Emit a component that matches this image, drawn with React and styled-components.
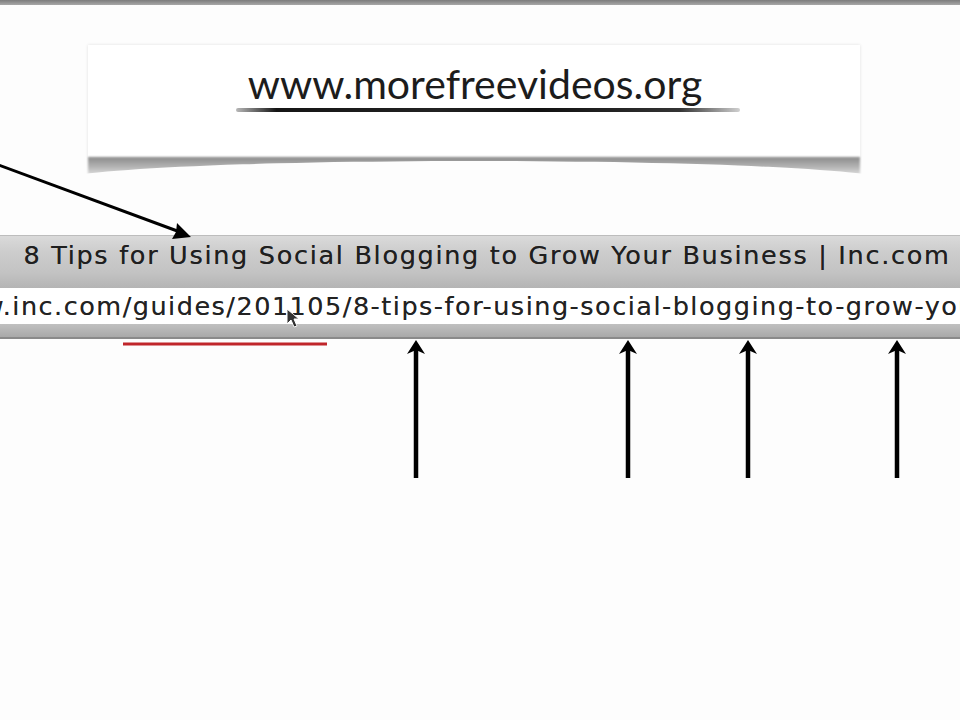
import React from "react";
import styled, { createGlobalStyle } from "styled-components";

const GlobalStyle = createGlobalStyle`
  html, body {
    margin: 0;
    padding: 0;
    background: #fdfdfd;
  }
  body {
    width: 960px;
    height: 720px;
    overflow: hidden;
  }
`;

const Page = styled.div`
  position: relative;
  width: 960px;
  height: 720px;
  overflow: hidden;
  background: #fdfdfd;
  display: flex;
  flex-direction: column;
`;

const TopBar = styled.div`
  height: 5px;
  flex-shrink: 0;
  background: linear-gradient(to bottom, #7c7c7c, #a8a8a8);
`;

const CardRow = styled.div`
  padding: 40px 100px 0 88px;
  height: 230px;
  flex-shrink: 0;
  box-sizing: border-box;
`;

const Card = styled.div`
  position: relative;
  height: 112px;
  background: #ffffff;
  display: flex;
  flex-direction: column;
  align-items: center;
  padding-top: 17px;
  box-sizing: border-box;
  box-shadow: 0 0 3px rgba(0, 0, 0, 0.12);

  &::before {
    content: "";
    position: absolute;
    left: 0;
    right: 0;
    top: 100%;
    height: 18px;
    background: linear-gradient(to bottom, #8a8a8a, #b8b8b8 60%, #e0e0e0);
    filter: blur(1.2px);
  }
  &::after {
    content: "";
    position: absolute;
    left: -30px;
    right: -30px;
    top: calc(100% + 4px);
    height: 40px;
    background: #fdfdfd;
    border-radius: 50% 50% 0 0 / 20px 20px 0 0;
  }
`;

const SiteName = styled.div`
  font-family: "Lato", "Open Sans", sans-serif;
  font-size: 41px;
  color: #1c1c1c;
  line-height: 44px;
  padding-left: 2px;
`;

const Brush = styled.div`
  width: 504px;
  height: 4px;
  margin-top: 2px;
  margin-left: 28px;
  background: linear-gradient(
    to right,
    rgba(20, 20, 20, 0.3),
    #151515 8%,
    #222 40%,
    #111 60%,
    #333 88%,
    rgba(20, 20, 20, 0.2)
  );
  border-radius: 2px;
  filter: blur(0.7px);
`;

const TitleBar = styled.div`
  position: relative;
  z-index: 1;
  height: 53px;
  flex-shrink: 0;
  background: linear-gradient(to bottom, #dadada, #cdcdcd 30%, #c3c3c3 70%, #b4b4b4);
  border-top: 1px solid #bdbdbd;
  box-sizing: border-box;
  padding-top: 3px;
  text-align: center;
`;

const Title = styled.div`
  font-family: "DejaVu Sans", "Liberation Sans", sans-serif;
  font-size: 25.5px;
  letter-spacing: 1.7px;
  color: #1f1f1f;
  text-shadow: 0 0 0.5px rgba(0, 0, 0, 0.6);
  padding-left: 14px;
  line-height: 32px;
  white-space: nowrap;
`;

const AddressField = styled.div`
  position: relative;
  z-index: 1;
  height: 36px;
  flex-shrink: 0;
  background: #ffffff;
  overflow: hidden;
  display: flex;
  align-items: center;
`;

const Address = styled.div`
  font-family: "DejaVu Sans", "Liberation Sans", sans-serif;
  font-size: 25.5px;
  letter-spacing: 1.5px;
  color: #222;
  text-shadow: 0 0 0.5px rgba(0, 0, 0, 0.5);
  white-space: nowrap;
  margin-left: -62px;
`;

const AddressFooter = styled.div`
  height: 13px;
  flex-shrink: 0;
  background: linear-gradient(to bottom, #c0c0c0, #a9a9a9);
  border-bottom: 2px solid #8a8a8a;
`;

const Annotations = styled.svg`
  display: block;
  width: 960px;
  height: 160px;
  flex-shrink: 0;
`;

const Overlay = styled.svg`
  position: absolute;
  z-index: 2;
  left: 0;
  top: 0;
  width: 960px;
  height: 720px;
  pointer-events: none;
`;

const arrowsX = [416, 628, 748, 897];

export default function App() {
  return (
    <Page>
      <GlobalStyle />
      <TopBar />
      <CardRow>
        <Card>
          <SiteName>www.morefreevideos.org</SiteName>
          <Brush />
        </Card>
      </CardRow>
      <TitleBar>
        <Title>8 Tips for Using Social Blogging to Grow Your Business | Inc.com</Title>
      </TitleBar>
      <AddressField>
        <Address>www.inc.com/guides/201105/8-tips-for-using-social-blogging-to-grow-your-business.html</Address>
      </AddressField>
      <AddressFooter />
      <Annotations viewBox="0 0 960 160">
        <line x1="123" y1="5" x2="327" y2="5" stroke="#c0262b" strokeWidth="3" />
        {arrowsX.map((x) => (
          <g key={x}>
            <line x1={x} y1="10" x2={x} y2="139" stroke="#000" strokeWidth="4.5" />
            <path d={`M${x} 1 L${x + 9} 15 L${x} 11 L${x - 9} 15 Z`} fill="#000" />
          </g>
        ))}
      </Annotations>
      <Overlay viewBox="0 0 960 720">
        <line x1="-4" y1="164" x2="180" y2="232" stroke="#000" strokeWidth="3" />
        <path d="M191 237 L172 239 L176 232 L177 223 Z" fill="#000" />
        <path
          d="M287 309 L287 324 L291 320 L294 327 L297 326 L294 319 L299 319 Z"
          fill="#111"
          stroke="#ffffff"
          strokeWidth="1"
          opacity="0.85"
        />
      </Overlay>
    </Page>
  );
}
